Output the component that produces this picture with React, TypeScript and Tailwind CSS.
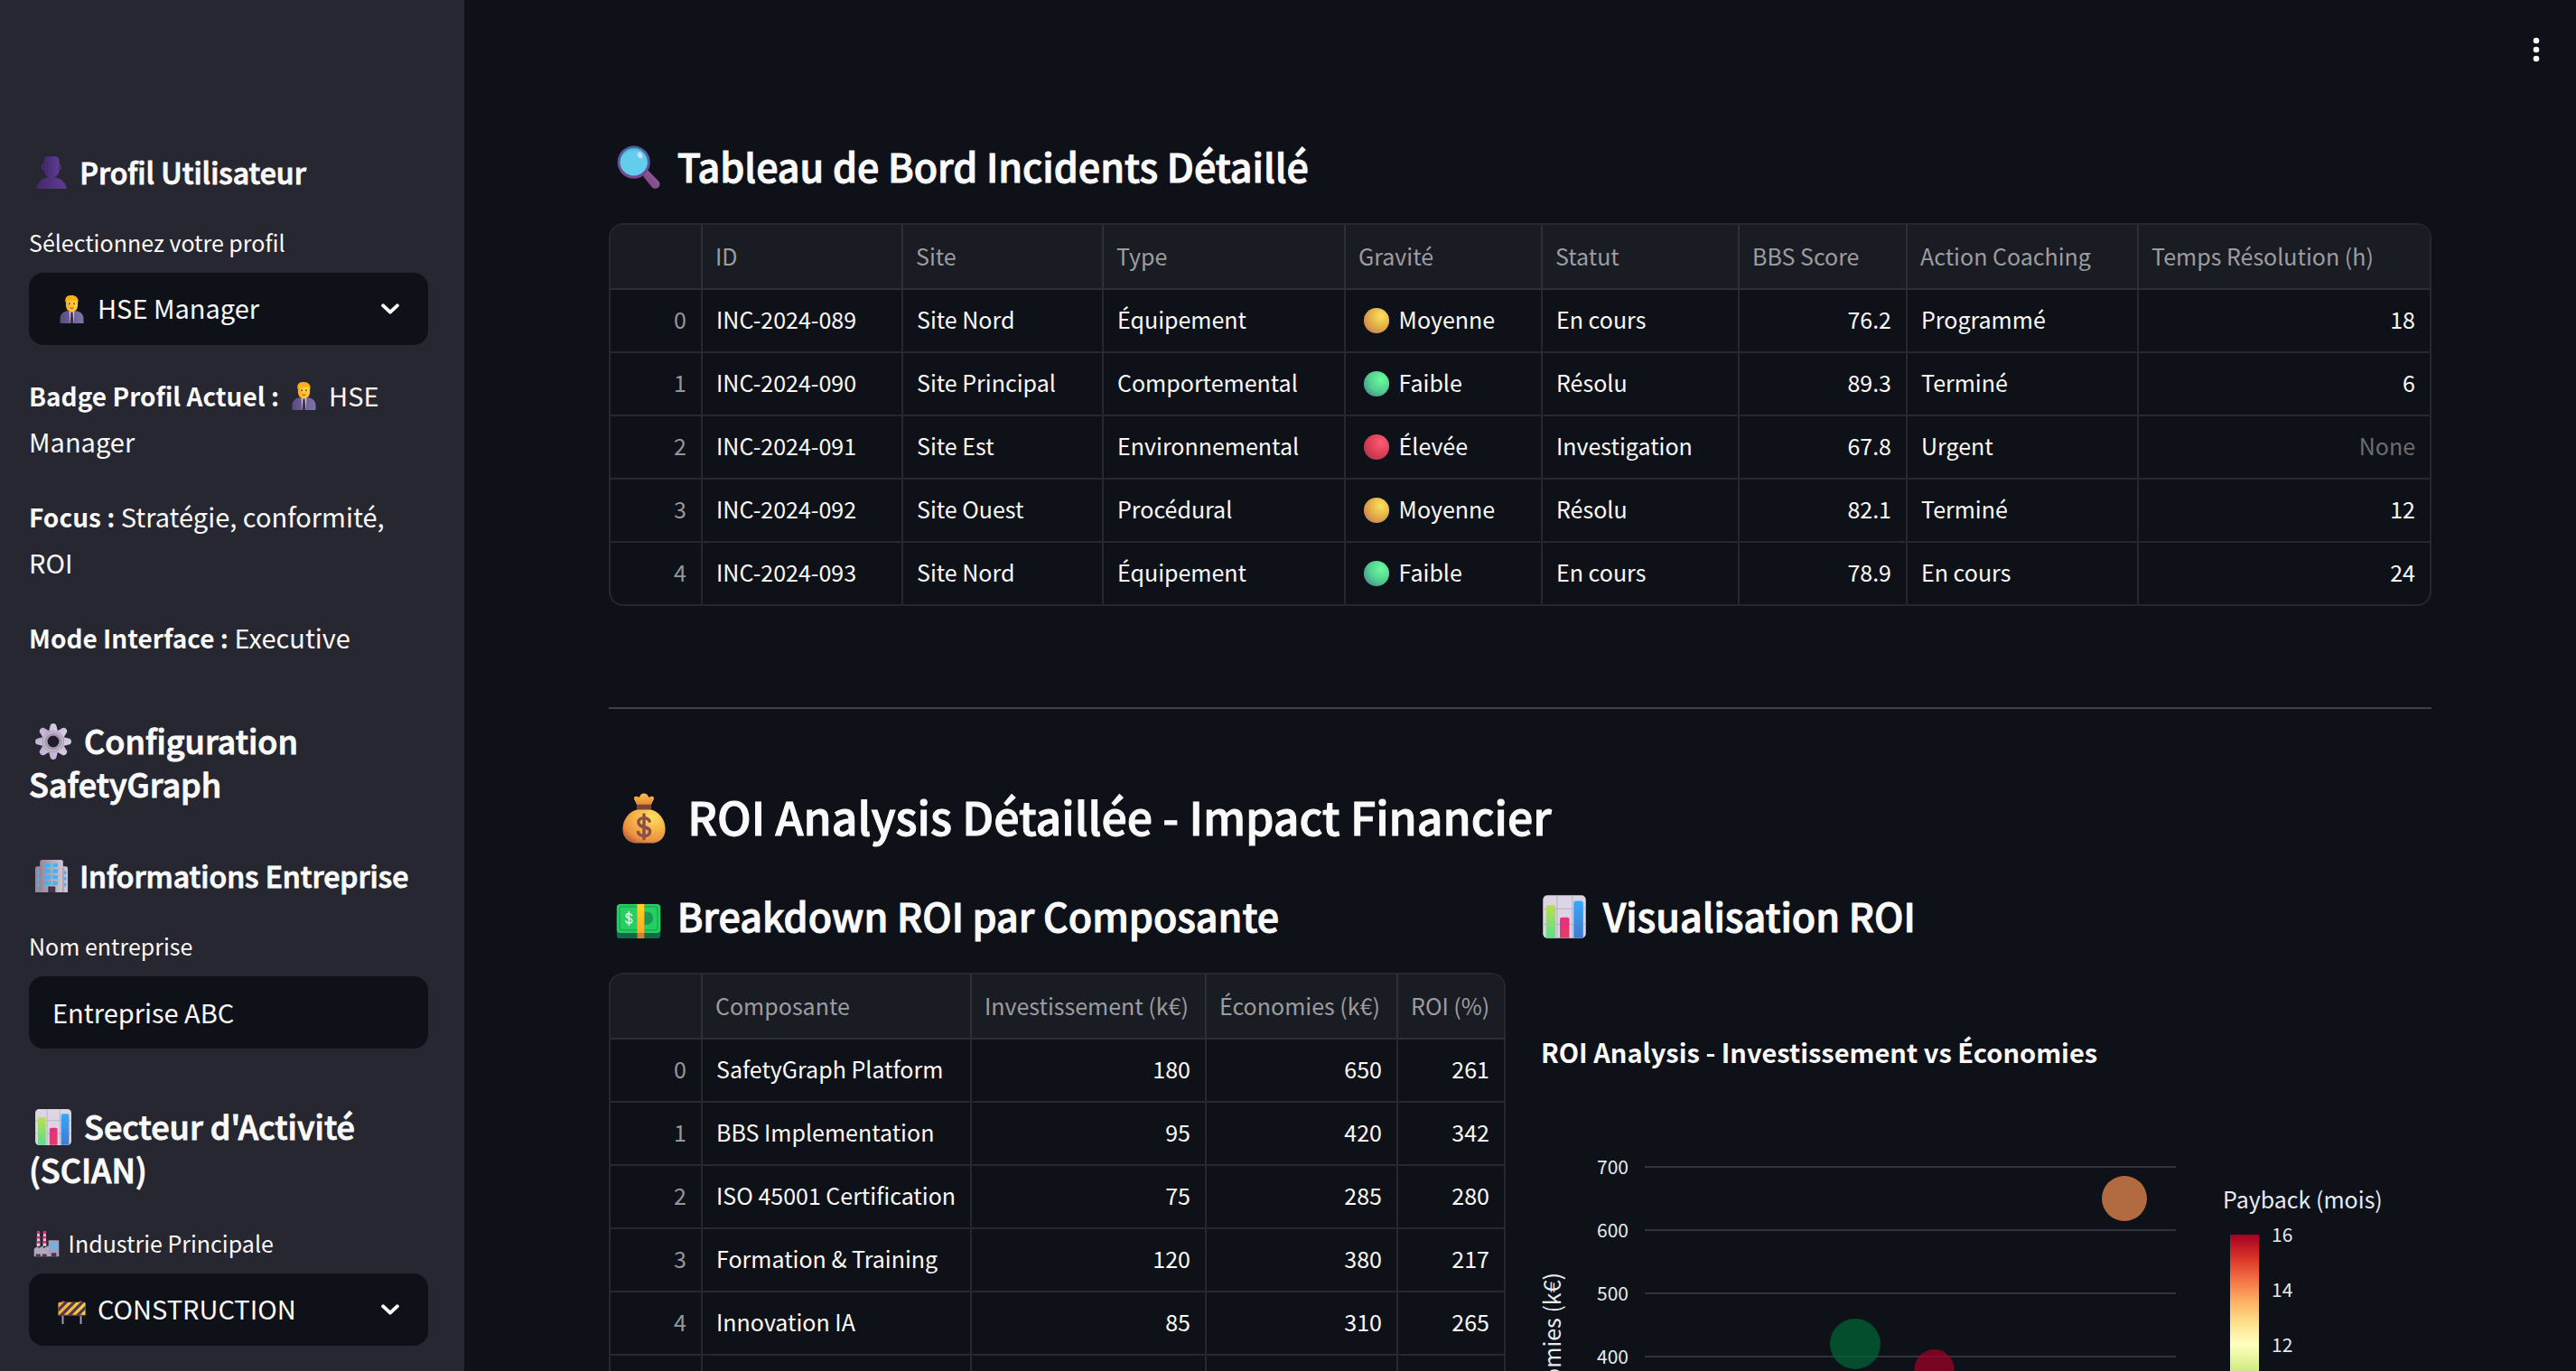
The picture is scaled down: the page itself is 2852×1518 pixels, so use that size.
import { useId, type ReactNode } from "react";

/* ---------- Emoji drawings, all on a 32 × 32 grid ---------- */

type ArtProps = { id: string };

function Magnifier({ id }: ArtProps) {
  return (
    <>
      <defs>
        <linearGradient id={`${id}r`} x1="0" y1="0" x2="0" y2="1">
          <stop offset="0" stopColor="#4366a3" />
          <stop offset="1" stopColor="#79468f" />
        </linearGradient>
        <linearGradient id={`${id}h`} x1="0" y1="1" x2="1" y2="0">
          <stop offset="0" stopColor="#74407f" />
          <stop offset="1" stopColor="#a0609f" />
        </linearGradient>
      </defs>
      <path d="M19.5 19.5l2.6-1.8 8 8.2a3.2 3.2 0 0 1-4.6 4.5l-6-7.6z" fill={`url(#${id}h)`} />
      <circle cx="12.6" cy="12.6" r="11.6" fill={`url(#${id}r)`} />
      <circle cx="12.6" cy="12.4" r="9.7" fill="#63cdee" />
      <path d="M3.2 10.5a9.7 9.7 0 0 1 18.8 0c-2.6-4.6-5.8-6.6-9.4-6.6s-6.8 2-9.4 6.6z" fill="#4cb4de" />
      <ellipse cx="17" cy="7.6" rx="1.7" ry="2.3" transform="rotate(-25 17 7.6)" fill="#bfe2f7" />
    </>
  );
}

function MoneyBag({ id }: ArtProps) {
  return (
    <>
      <defs>
        <radialGradient id={`${id}b`} cx=".68" cy=".25" r=".85">
          <stop offset="0" stopColor="#ffdf63" />
          <stop offset=".45" stopColor="#f7b548" />
          <stop offset=".8" stopColor="#ea9140" />
          <stop offset="1" stopColor="#bb6040" />
        </radialGradient>
        <linearGradient id={`${id}t`} x1="0" y1="0" x2="0" y2="1">
          <stop offset="0" stopColor="#ffc04c" />
          <stop offset="1" stopColor="#e08a35" />
        </linearGradient>
      </defs>
      <path d="M11.8 8L10 4.4c-.4-1.4.6-2 1.8-1.6l1.4.4c.4-1.6 1.4-2.4 2.8-2.4s2.4.8 2.8 2.4l1.4-.4c1.2-.4 2.2.2 1.8 1.6L20.200 8z" fill={`url(#${id}t)`} />
      <path d="M16 10c8.500 0 13 6.300 13 12.700C29 28 25.300 31.200 20.500 31.200h-9C6.700 31.200 3 28 3 22.700 3 16.300 7.500 10 16 10z" fill={`url(#${id}b)`} />
      <rect x="11.500" y="7.600" width="9" height="3.200" rx="1" fill="#7a4631" />
      <path d="M19.400 17.800c-.5-1.300-1.800-2-3.400-2-2 0-3.400 1-3.400 2.700 0 3.900 7 1.900 7 5.600 0 1.700-1.500 2.700-3.600 2.700-1.900 0-3.200-.8-3.600-2.300M16 13.800v14.800" fill="none" stroke="#8a5048" strokeWidth="1.900" strokeLinecap="round" />
    </>
  );
}

function Banknote({ id }: ArtProps) {
  return (
    <>
      <defs>
        <linearGradient id={`${id}y`} x1="0" y1="0" x2="0" y2="1">
          <stop offset="0" stopColor="#ffd41f" />
          <stop offset="1" stopColor="#fba92f" />
        </linearGradient>
      </defs>
      <rect x=".5" y="13" width="31" height="18.400" rx="2.500" fill="#116a46" />
      <rect x=".5" y="7" width="31" height="20.500" rx="2.500" fill="#25cf62" />
      <rect x="2.600" y="8.900" width="26.800" height="16.600" rx="1.500" fill="none" stroke="#1aa651" strokeWidth=".8" />
      <path d="M20 12.400h1.600a4.700 4.700 0 0 1 0 9.400H20z" fill="#179a55" />
      <path d="M11.200 15.100c-.3-.9-1.100-1.300-2-1.300-1.200 0-2 .6-2 1.600 0 2.300 4.200 1.200 4.200 3.500 0 1.100-.9 1.700-2.200 1.700-1.100 0-1.900-.5-2.200-1.400M9.200 12.600v9.200" fill="none" stroke="#d9f3df" strokeWidth="1.100" strokeLinecap="round" />
      <rect x="15" y="7" width="5" height="20.500" fill={`url(#${id}y)`} />
      <rect x="15" y="27.500" width="5" height="3.900" fill="#cc8334" />
    </>
  );
}

function BarChart({ id }: ArtProps) {
  return (
    <>
      <defs>
        <linearGradient id={`${id}g`} x1="0" y1="0" x2="0" y2="1">
          <stop offset="0" stopColor="#b8e04f" />
          <stop offset="1" stopColor="#5fdc8f" />
        </linearGradient>
        <linearGradient id={`${id}p`} x1="0" y1="0" x2="0" y2="1">
          <stop offset="0" stopColor="#ea2c86" />
          <stop offset="1" stopColor="#e23e63" />
        </linearGradient>
        <linearGradient id={`${id}b`} x1="0" y1="0" x2="0" y2="1">
          <stop offset="0" stopColor="#36a8fb" />
          <stop offset="1" stopColor="#3f7bd0" />
        </linearGradient>
      </defs>
      <rect x=".8" y=".8" width="30.400" height="30.400" rx="3.200" fill="#dcd6e4" />
      <path d="M1 10.500h30M1 21.300h30M10.800 1v30M21.600 1v30" stroke="#bfb5c9" strokeWidth=".8" />
      <path d="M3 31V9.400A1.500 1.500 0 0 1 4.500 7.900h3.700a1.500 1.500 0 0 1 1.500 1.500V31z" fill={`url(#${id}g)`} />
      <path d="M12.800 31V18a1.500 1.500 0 0 1 1.500-1.500H18a1.500 1.500 0 0 1 1.500 1.500v13z" fill={`url(#${id}p)`} />
      <path d="M22.600 31V6.300a1.500 1.500 0 0 1 1.500-1.500h3.700a1.500 1.500 0 0 1 1.500 1.500V31z" fill={`url(#${id}b)`} />
    </>
  );
}

function Silhouette({ id }: ArtProps) {
  return (
    <>
      <defs>
        <linearGradient id={`${id}s`} x1="0" y1="0" x2="1" y2="0">
          <stop offset="0" stopColor="#43296b" />
          <stop offset="1" stopColor="#5f3c96" />
        </linearGradient>
      </defs>
      <path d="M1.800 31.200C3.200 24.500 8 20.300 16 20.300s12.800 4.200 14.200 10.900z" fill={`url(#${id}s)`} />
      <path d="M8.800 5c0-2.600 2-4.200 4.600-4.200h5.200c2.600 0 4.600 1.600 4.600 4.200v8.600c0 4-3 7.200-7.200 7.200s-7.200-3.200-7.200-7.200z" fill={`url(#${id}s)`} />
      <path d="M8.900 9c-1.200 0-1.700 1-1.700 2.200s.6 2.200 1.700 2.200M23.100 9c1.200 0 1.700 1 1.700 2.200s-.6 2.200-1.700 2.200" fill="none" stroke="#53338a" strokeWidth="1" />
    </>
  );
}

function OfficeWorker({ id }: ArtProps) {
  return (
    <>
      <defs>
        <linearGradient id={`${id}f`} x1="0" y1="0" x2="1" y2="0">
          <stop offset="0" stopColor="#f9a825" />
          <stop offset=".5" stopColor="#ffcb2e" />
        </linearGradient>
        <linearGradient id={`${id}c`} x1="0" y1="0" x2="1" y2="0">
          <stop offset="0" stopColor="#594b80" />
          <stop offset="1" stopColor="#7f75a8" />
        </linearGradient>
      </defs>
      <path d="M3.400 31v-5c0-5 3.600-8.400 8.600-8.400h8c5 0 8.600 3.400 8.600 8.400v5z" fill={`url(#${id}c)`} />
      <path d="M13.200 18l2.800 1.500 2.800-1.500L18 31h-4z" fill="#cfc6dd" />
      <path d="M14.900 19.400h2.200l.7 11.600h-3.600z" fill="#3d2f4f" />
      <path d="M9.600 8.500C9.600 4 12 2 16 2s6.400 2 6.400 6.500v2.800c0 4.400-2.600 7.200-6.400 7.200s-6.400-2.800-6.400-7.200z" fill={`url(#${id}f)`} />
      <path d="M9 8.600C8.600 3.600 10.400 1 14.800 1c5.600-.2 8.400 2.200 8.200 7.600l-1.400-2.600-11 .2z" fill="#fbaf14" />
      <rect x="12.200" y="8.800" width="2.200" height="2.200" rx="1" fill="#fff" />
      <rect x="17.600" y="8.800" width="2.200" height="2.200" rx="1" fill="#fff" />
      <circle cx="13.500" cy="9.900" r=".9" fill="#40314c" />
      <circle cx="18.500" cy="9.900" r=".9" fill="#40314c" />
      <path d="M14.200 14c1.200.9 2.400.9 3.600 0 0 1.700-3.600 1.700-3.600 0z" fill="#d8234a" stroke="#d8234a" strokeWidth=".4" />
    </>
  );
}

function Gear({ id }: ArtProps) {
  return (
    <>
      <defs>
        <linearGradient id={`${id}g`} x1="1" y1="0" x2="0" y2="1">
          <stop offset="0" stopColor="#dfd5ea" />
          <stop offset="1" stopColor="#b9a6d0" />
        </linearGradient>
      </defs>
      <g fill={`url(#${id}g)`}>
        {[0, 45, 90, 135].map((angle) => (
          <path key={angle} transform={`rotate(${angle} 16 16)`} d="M13.300 3.200c0-1.400 1.100-2.400 2.700-2.400s2.700 1 2.700 2.400L20.200 9v14l-1.500 5.800c0 1.400-1.100 2.400-2.700 2.400s-2.700-1-2.700-2.400L11.800 23V9z M16 11.200a4.800 4.800 0 1 0 0 9.600 4.800 4.800 0 1 0 0-9.600z" fillRule="evenodd" />
        ))}
      </g>
      <circle cx="16" cy="16" r="7.100" fill="none" stroke="#a59ab0" strokeWidth="4.200" />
      <circle cx="16" cy="16" r="7.900" fill="none" stroke="#c3b8cf" strokeWidth="1.200" />
      <circle cx="16" cy="16" r="4.900" fill="#1f1d2a" />
    </>
  );
}

function Office({ id }: ArtProps) {
  return (
    <>
      <defs>
        <linearGradient id={`${id}w`} x1="0" y1="0" x2="1" y2="0">
          <stop offset="0" stopColor="#94859c" />
          <stop offset=".5" stopColor="#b3a8b8" />
          <stop offset="1" stopColor="#cfc5d3" />
        </linearGradient>
      </defs>
      <path d="M.8 31.200V9a2 2 0 0 1 2-2h26.400a2 2 0 0 1 2 2v22.200z" fill={`url(#${id}w)`} />
      <path d="M5.200 31.200V2.800a2 2 0 0 1 2-2h17.600a2 2 0 0 1 2 2v28.400z" fill={`url(#${id}w)`} />
      <path d="M5.200 31.200V8M26.800 31.200V8" stroke="#8b7e93" strokeWidth=".7" />
      <g fill="#3cb6f7">
        {[4, 9.600, 15.200, 20.800].map((y) => (
          <g key={y}>
            <rect x="10" y={y} width="5.200" height="3.600" />
            <rect x="17.200" y={y} width="4.600" height="3.600" />
          </g>
        ))}
        {[11.200, 16.800, 22.400].map((y) => (
          <g key={y}>
            <rect x="2.600" y={y} width="2.400" height="3.200" />
            <rect x="27.600" y={y} width="2.200" height="3.200" />
          </g>
        ))}
      </g>
      <path d="M12.800 31.200v-4.600a1 1 0 0 1 1-1h4.800a1 1 0 0 1 1 1v4.600z" fill="#46304f" />
    </>
  );
}

function Factory() {
  return (
    <>
      {[4.200, 11.800].map((x) => (
        <g key={x}>
          <path d={`M${x + 0.400} .6h3l.6 18h-4.200z`} fill="#dccfe0" />
          {[0.600, 6.400, 12.200].map((y) => (
            <rect key={y} x={x} y={y} width="3.800" height="3" rx=".6" fill="#d6356f" />
          ))}
        </g>
      ))}
      <path d="M.8 31.200V21.500L6 18.600v2.600l5.800-3.200v3l7-3.200v13.400z" fill="#b2a7ba" />
      <path d="M18.400 31.200V12.400a1 1 0 0 1 1-1h10.800a1 1 0 0 1 1 1v18.800z" fill="#a99cb4" />
      <g fill="#4fc0f8">
        {[13.800, 17.400, 21].map((y) =>
          [20.600, 23.800, 27].map((x) => <rect key={`${x}-${y}`} x={x} y={y} width="2.400" height="2.600" />),
        )}
      </g>
      <path d="M3 31.200v-3h5.600v3zM10.800 31.200v-3h5.400v3zM22 31.200v-4.400h6v4.400z" fill="#4b3558" />
    </>
  );
}

function Barrier({ id }: ArtProps) {
  return (
    <>
      <defs>
        <linearGradient id={`${id}y`} x1="0" y1="0" x2="1" y2="0">
          <stop offset="0" stopColor="#f9a63a" />
          <stop offset="1" stopColor="#fbd63b" />
        </linearGradient>
        <clipPath id={`${id}c`}>
          <rect x="1.400" y="7.400" width="29.200" height="14.800" rx="1.600" />
        </clipPath>
      </defs>
      <path d="M6.300 20v11M25.700 20v11" stroke="#a99ab5" strokeWidth="1.900" />
      <path d="M5.400 7.600a1.400 1.400 0 0 1 2.800 0zM23.800 7.600a1.400 1.400 0 0 1 2.800 0z" fill="#d92c6b" stroke="#d92c6b" strokeWidth=".5" />
      <g clipPath={`url(#${id}c)`}>
        <rect x="1" y="7" width="30" height="16" fill={`url(#${id}y)`} />
        <path d="M-5 22.500l16-16M3.800 22.500l16-16M12.600 22.500l16-16M21.400 22.500l16-16" stroke="#4d3a55" strokeWidth="3.100" />
        <path d="M1 21.600h30" stroke="#55405a" strokeWidth="1.200" />
      </g>
    </>
  );
}

function Dot({ id, light, base, dark }: ArtProps & { light: string; base: string; dark: string }) {
  return (
    <>
      <defs>
        <radialGradient id={`${id}d`} cx=".68" cy=".32" r=".72">
          <stop offset="0" stopColor={light} />
          <stop offset=".65" stopColor={base} />
          <stop offset="1" stopColor={dark} />
        </radialGradient>
      </defs>
      <circle cx="16" cy="16" r="15" fill={`url(#${id}d)`} />
    </>
  );
}

type EmojiName =
  | "magnifier" | "moneyBag" | "banknote" | "barChart" | "silhouette"
  | "officeWorker" | "gear" | "office" | "factory" | "barrier"
  | "yellow" | "green" | "red";

const emojiArt: Record<EmojiName, (id: string) => ReactNode> = {
  magnifier: (id) => <Magnifier id={id} />,
  moneyBag: (id) => <MoneyBag id={id} />,
  banknote: (id) => <Banknote id={id} />,
  barChart: (id) => <BarChart id={id} />,
  silhouette: (id) => <Silhouette id={id} />,
  officeWorker: (id) => <OfficeWorker id={id} />,
  gear: (id) => <Gear id={id} />,
  office: (id) => <Office id={id} />,
  factory: () => <Factory />,
  barrier: (id) => <Barrier id={id} />,
  yellow: (id) => <Dot id={id} light="#ffe25e" base="#e0ad45" dark="#cf8a55" />,
  green: (id) => <Dot id={id} light="#6bfca0" base="#52cf8e" dark="#4d9d92" />,
  red: (id) => <Dot id={id} light="#ff5a78" base="#dd3f55" dark="#b33a55" />,
};

const emojiSize = {
  xs: "size-[29px] ml-[5px] mr-1 align-[-5px]",
  dot: "size-[30px] ml-1 mr-1 align-[-6px]",
  sm: "size-[33px] ml-1 mr-[5px] align-[-5px]",
  overlay: "size-[33px]",
  md: "size-[38px] ml-1.5 mr-[5px] align-[-6px]",
  lg: "size-[42px] ml-1.5 mr-[5px] align-[-7px]",
  xl: "size-[50px] ml-2 mr-2 align-[-8px]",
  "2xl": "size-[58px] ml-2.5 mr-2 align-[-10px]",
};

function Emoji({ name, size }: { name: EmojiName; size: keyof typeof emojiSize }) {
  const id = useId();
  return (
    <svg viewBox="0 0 32 32" aria-hidden="true" className={`inline-block shrink-0 ${emojiSize[size]}`}>
      {emojiArt[name](id)}
    </svg>
  );
}

/* ---------- Headings: medium face thickened to a semibold ---------- */

const semibold = "font-medium [-webkit-text-stroke:1px_#fafafa]";
const sectionTitle = `text-[43px] leading-[58px] ${semibold}`;
const sidebarTitle = `text-[36px] leading-12 ${semibold}`;
const sidebarSubtitle = `text-[32px] leading-10 ${semibold}`;

/* ---------- Sidebar ---------- */

function SelectField({ id, label, labelEmoji, emoji, value }: {
  id: string; label: string; labelEmoji?: EmojiName; emoji: EmojiName; value: string;
}) {
  return (
    <div className="mt-[38px] flex flex-col gap-3.5">
      <label htmlFor={id} className="text-[25px] leading-10">
        {labelEmoji && <><Emoji name={labelEmoji} size="xs" /> </>}
        {label}
      </label>
      <div className="relative">
        <select id={id} defaultValue={value} className="h-20 w-full appearance-none rounded-2xl bg-[#0e1117] pr-16 pb-0.5 pl-[76px] text-[29px] text-[#fafafa] outline-none">
          <option>{value}</option>
        </select>
        <span className="pointer-events-none absolute inset-y-0 left-[31px] flex items-center">
          <Emoji name={emoji} size="overlay" />
        </span>
        <span className="pointer-events-none absolute inset-y-0 right-8 flex items-center">
          <svg viewBox="0 0 20 12" aria-hidden="true" className="h-3 w-5">
            <path d="M2.200 2.400L10 9.600l7.800-7.200" fill="none" stroke="#fafafa" strokeWidth="4" strokeLinecap="round" strokeLinejoin="round" />
          </svg>
        </span>
      </div>
    </div>
  );
}

function ProfileFact({ name, children }: { name: string; children: ReactNode }) {
  return (
    <p className="text-[29px] leading-[51px]">
      <strong className="text-[28px] leading-none">{name} :</strong> {children}
    </p>
  );
}

function Sidebar() {
  return (
    <aside className="w-[514px] shrink-0 overflow-y-auto bg-[#262730] pt-[170px] pr-10 pb-16 pl-8 [scrollbar-width:none]">
      <h3 className={sidebarSubtitle}><Emoji name="silhouette" size="md" /> Profil Utilisateur</h3>
      <SelectField id="profile" label="Sélectionnez votre profil" emoji="officeWorker" value="HSE Manager" />
      <div className="mt-[30px] flex flex-col gap-8">
        <ProfileFact name="Badge Profil Actuel"><Emoji name="officeWorker" size="sm" /> HSE Manager</ProfileFact>
        <ProfileFact name="Focus">Stratégie, conformité, ROI</ProfileFact>
        <ProfileFact name="Mode Interface">Executive</ProfileFact>
      </div>
      <h2 className={`mt-16 ${sidebarTitle}`}><Emoji name="gear" size="lg" /> Configuration SafetyGraph</h2>
      <h3 className={`mt-[58px] ${sidebarSubtitle}`}><Emoji name="office" size="md" /> Informations Entreprise</h3>
      <div className="mt-[38px] flex flex-col gap-3.5">
        <label htmlFor="company" className="text-[25px] leading-10">Nom entreprise</label>
        <input id="company" type="text" defaultValue="Entreprise ABC" className="h-20 w-full rounded-2xl bg-[#0e1117] px-[26px] pb-0.5 text-[29px] text-[#fafafa] outline-none" />
      </div>
      <h2 className={`mt-[61px] ${sidebarTitle}`}><Emoji name="barChart" size="lg" /> Secteur d'Activité (SCIAN)</h2>
      <SelectField id="industry" label="Industrie Principale" labelEmoji="factory" emoji="barrier" value="CONSTRUCTION" />
    </aside>
  );
}

/* ---------- Data tables ---------- */

type Column = { title: string; width: string; numeric?: boolean };
type Cell = string | { emoji: EmojiName; text: string } | null;

const incidentColumns: Column[] = [
  { title: "", width: "w-[102px]", numeric: true },
  { title: "ID", width: "w-[222px]" },
  { title: "Site", width: "w-[222px]" },
  { title: "Type", width: "w-[268px]" },
  { title: "Gravité", width: "w-[218px]" },
  { title: "Statut", width: "w-[218px]" },
  { title: "BBS Score", width: "w-[186px]", numeric: true },
  { title: "Action Coaching", width: "w-[256px]" },
  { title: "Temps Résolution (h)", width: "", numeric: true },
];

const medium: Cell = { emoji: "yellow", text: "Moyenne" };
const low: Cell = { emoji: "green", text: "Faible" };
const high: Cell = { emoji: "red", text: "Élevée" };

const incidentRows: Cell[][] = [
  ["0", "INC-2024-089", "Site Nord", "Équipement", medium, "En cours", "76.2", "Programmé", "18"],
  ["1", "INC-2024-090", "Site Principal", "Comportemental", low, "Résolu", "89.3", "Terminé", "6"],
  ["2", "INC-2024-091", "Site Est", "Environnemental", high, "Investigation", "67.8", "Urgent", null],
  ["3", "INC-2024-092", "Site Ouest", "Procédural", medium, "Résolu", "82.1", "Terminé", "12"],
  ["4", "INC-2024-093", "Site Nord", "Équipement", low, "En cours", "78.9", "En cours", "24"],
];

const roiColumns: Column[] = [
  { title: "", width: "w-[102px]", numeric: true },
  { title: "Composante", width: "w-[298px]" },
  { title: "Investissement (k€)", width: "w-[260px]", numeric: true },
  { title: "Économies (k€)", width: "w-[212px]", numeric: true },
  { title: "ROI (%)", width: "", numeric: true },
];

const roiRows: Cell[][] = [
  ["0", "SafetyGraph Platform", "180", "650", "261"],
  ["1", "BBS Implementation", "95", "420", "342"],
  ["2", "ISO 45001 Certification", "75", "285", "280"],
  ["3", "Formation & Training", "120", "380", "217"],
  ["4", "Innovation IA", "85", "310", "265"],
  ["", "", "", "", ""],
];

function CellContent({ cell }: { cell: Cell }) {
  if (cell === null) return <span className="text-[#6c6d71]">None</span>;
  if (typeof cell === "string") return <>{cell}</>;
  return <><Emoji name={cell.emoji} size="dot" /> {cell.text}</>;
}

function DataTable({ label, columns, rows }: { label: string; columns: Column[]; rows: Cell[][] }) {
  return (
    <div className="overflow-hidden rounded-2xl border-2 border-[#26282d]">
      <table aria-label={label} className="w-full table-fixed border-separate border-spacing-0 text-[25px] leading-10 whitespace-nowrap">
        <thead>
          <tr className="h-18">
            {columns.map((column) => (
              <th key={column.title} scope="col" className={`border-r-2 border-b-2 border-[#2c2f36] bg-[#1a1c24] pb-0.5 pl-3.5 text-left font-normal text-[#9c9da0] last:border-r-0 ${column.width}`}>
                {column.title}
              </th>
            ))}
          </tr>
        </thead>
        <tbody className="[&>tr:last-child>td]:border-b-0">
          {rows.map((row, r) => (
            <tr key={r} className="h-[70px] last:h-[68px]">
              {row.map((cell, c) => (
                <td key={c} className={`border-r-2 border-b-2 border-[#26282d] pr-4 pb-1 pl-[15px] first:text-[#96979a] last:border-r-0 ${columns[c].numeric ? "text-right" : "text-left"}`}>
                  <CellContent cell={cell} />
                </td>
              ))}
            </tr>
          ))}
        </tbody>
      </table>
    </div>
  );
}

/* ---------- ROI bubble chart ---------- */

const chartX = (investment: number) => 355 + (investment - 95) * 3.506;
const chartY = (savings: number) => 425 - (savings - 400) * 0.7;

const bubbles = [
  { investment: 180, savings: 650, radius: 25, color: "#f89054" },
  { investment: 95, savings: 420, radius: 28, color: "#006837" },
  { investment: 120, savings: 380, radius: 22, color: "#a50026" },
];

const paybackScale = ["#a50026", "#d73027", "#f46d43", "#fdae61", "#fee08b", "#ffffbf", "#d9ef8b", "#a6d96a", "#66bd63", "#1a9850", "#006837"];

function RoiChart() {
  return (
    <svg viewBox="0 0 993 900" role="img" aria-label="ROI Analysis - Investissement vs Économies" className="w-full">
      <defs>
        <linearGradient id="payback" x1="0" y1="0" x2="0" y2="1">
          {paybackScale.map((color, i) => <stop key={color} offset={i / 10} stopColor={color} />)}
        </linearGradient>
      </defs>
      <text x="7" y="100" className="fill-[#fafafa] text-[29px] font-bold">ROI Analysis - Investissement vs Économies</text>
      {[700, 600, 500, 400].map((tick) => (
        <g key={tick}>
          <path d={`M122 ${chartY(tick)}H710`} stroke="#31333f" strokeWidth="2" />
          <text x="104" y={chartY(tick) + 8} textAnchor="end" className="fill-[#e6eaf1] text-[21px]">{tick}</text>
        </g>
      ))}
      <text transform="translate(29 332) rotate(-90)" textAnchor="end" className="fill-[#e6eaf1] text-[25px]">Économies (k€)</text>
      {bubbles.map((b) => (
        <circle key={b.investment} cx={chartX(b.investment)} cy={chartY(b.savings)} r={b.radius} fill={b.color} fillOpacity="0.7" />
      ))}
      <text x="762" y="261" className="fill-[#e6eaf1] text-[25px]">Payback (mois)</text>
      <rect x="770" y="290" width="32" height="243" fill="url(#payback)" />
      {[16, 14, 12].map((tick) => (
        <text key={tick} x="816" y={298 + (16 - tick) * 30.4} className="fill-[#e6eaf1] text-[21px]">{tick}</text>
      ))}
    </svg>
  );
}

/* ---------- Page ---------- */

export default function App() {
  return (
    <div className="flex h-screen overflow-hidden bg-[#0e1117] font-['Noto_Sans_CJK_SC','Noto_Sans',sans-serif] text-[#fafafa]">
      <Sidebar />
      <div className="relative min-w-0 flex-1">
        <button type="button" aria-label="Menu" className="absolute top-[35px] right-6 z-10 flex size-10 items-center justify-center">
          <svg viewBox="0 0 40 40" aria-hidden="true" className="size-10 fill-[#fafafa]">
            <circle cx="20" cy="10" r="3.300" />
            <circle cx="20" cy="20" r="3.300" />
            <circle cx="20" cy="30" r="3.300" />
          </svg>
        </button>
        <main className="h-full overflow-y-auto px-40 pt-[154px] [scrollbar-width:none]">
          <h3 className={sectionTitle}><Emoji name="magnifier" size="xl" /> Tableau de Bord Incidents Détaillé</h3>
          <div className="mt-[35px]">
            <DataTable label="Incidents" columns={incidentColumns} rows={incidentRows} />
          </div>
          <hr className="mt-28 border-t-2 border-[#3d4045]" />
          <h2 className={`mt-[85px] text-[50px] leading-[66px] ${semibold}`}><Emoji name="moneyBag" size="2xl" /> ROI Analysis Détaillée - Impact Financier</h2>
          <div className="mt-12 grid grid-cols-2 gap-8">
            <section className="min-w-0">
              <h3 className={sectionTitle}><Emoji name="banknote" size="xl" /> Breakdown ROI par Composante</h3>
              <div className="mt-[35px]">
                <DataTable label="Breakdown ROI par composante" columns={roiColumns} rows={roiRows} />
              </div>
            </section>
            <section className="min-w-0">
              <h3 className={sectionTitle}><Emoji name="barChart" size="xl" /> Visualisation ROI</h3>
              <div className="mt-[35px]">
                <RoiChart />
              </div>
            </section>
          </div>
        </main>
      </div>
    </div>
  );
}
